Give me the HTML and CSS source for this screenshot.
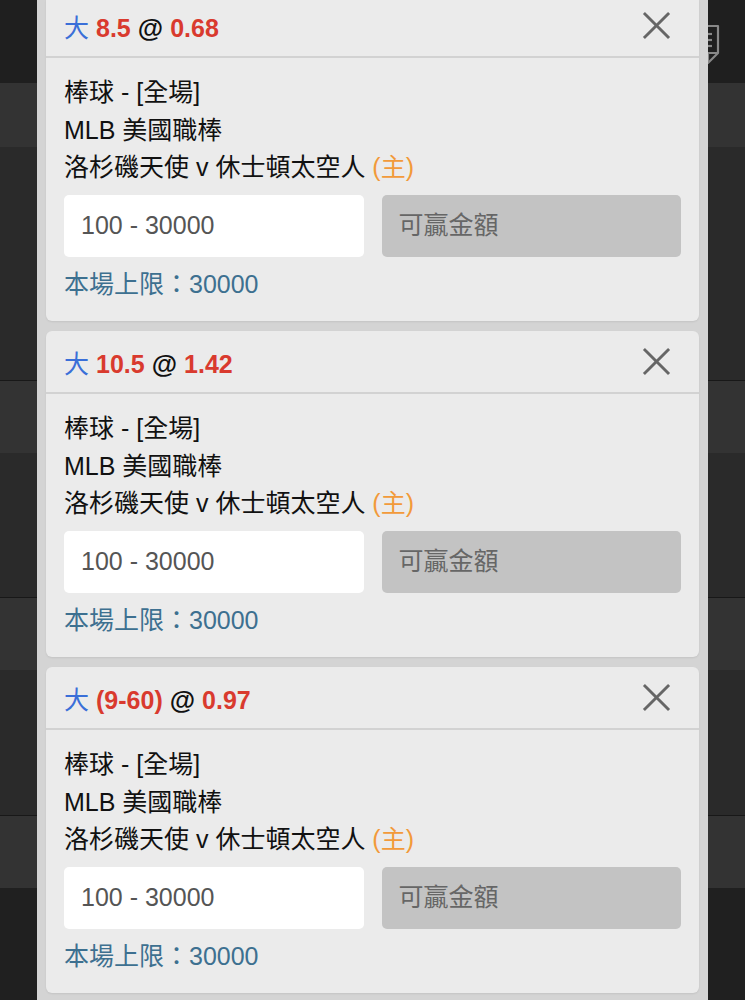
FILE: index.html
```html
<!DOCTYPE html>
<html lang="zh-Hant">
<head>
  <meta charset="UTF-8" />
  <meta name="viewport" content="width=device-width, initial-scale=1.0" />
  <title>投注單</title>
  <link rel="stylesheet" href="styles.css">
</head>
<body>
  <div class="backdrop">
    <div class="band band-top">
      <svg class="note-icon" viewBox="0 0 32 42" xmlns="http://www.w3.org/2000/svg">
        <path d="M3,3 L29,3 L29,30 L19,40 L3,40 Z" fill="none" stroke="#888" stroke-width="2.2" stroke-linejoin="round"/>
        <path d="M19,40 L19,30 L29,30" fill="none" stroke="#888" stroke-width="2.2" stroke-linejoin="round"/>
        <line x1="9" y1="11" x2="23" y2="11" stroke="#888" stroke-width="2.2"/>
        <line x1="9" y1="17" x2="23" y2="17" stroke="#888" stroke-width="2.2"/>
        <line x1="9" y1="23" x2="23" y2="23" stroke="#888" stroke-width="2.2"/>
      </svg>
    </div>
    <div class="band band-light" style="height:64px"></div>
    <div class="band band-mid" style="height:233px"></div>
    <div class="band band-light line" style="height:73px"></div>
    <div class="band band-mid" style="height:144px"></div>
    <div class="band band-light line" style="height:73px"></div>
    <div class="band band-mid" style="height:145px"></div>
    <div class="band band-light line" style="height:73px"></div>
    <div class="band band-dark"></div>
  </div>

  <div class="sheet">
    <div class="bet-list">

      <div class="bet-card">
        <div class="bet-head">
          <div class="bet-title">
            <span class="side">大</span>
            <span class="odds">8.5</span>
            <span class="at">@</span>
            <span class="odds">0.68</span>
          </div>
          <svg class="close-btn" viewBox="0 0 30 30" xmlns="http://www.w3.org/2000/svg">
            <line x1="2" y1="2" x2="28" y2="28" />
            <line x1="28" y1="2" x2="2" y2="28" />
          </svg>
        </div>
        <div class="bet-body">
          <div class="line">棒球 - [全場]</div>
          <div class="line">MLB 美國職棒</div>
          <div class="line">洛杉磯天使 v 休士頓太空人 <span class="home">(主)</span></div>
          <div class="amount-row">
            <div class="stake">100 - 30000</div>
            <div class="payout">可贏金額</div>
          </div>
          <div class="limit">本場上限：30000</div>
        </div>
      </div>

      <div class="bet-card">
        <div class="bet-head">
          <div class="bet-title">
            <span class="side">大</span>
            <span class="odds">10.5</span>
            <span class="at">@</span>
            <span class="odds">1.42</span>
          </div>
          <svg class="close-btn" viewBox="0 0 30 30" xmlns="http://www.w3.org/2000/svg">
            <line x1="2" y1="2" x2="28" y2="28" />
            <line x1="28" y1="2" x2="2" y2="28" />
          </svg>
        </div>
        <div class="bet-body">
          <div class="line">棒球 - [全場]</div>
          <div class="line">MLB 美國職棒</div>
          <div class="line">洛杉磯天使 v 休士頓太空人 <span class="home">(主)</span></div>
          <div class="amount-row">
            <div class="stake">100 - 30000</div>
            <div class="payout">可贏金額</div>
          </div>
          <div class="limit">本場上限：30000</div>
        </div>
      </div>

      <div class="bet-card">
        <div class="bet-head">
          <div class="bet-title">
            <span class="side">大</span>
            <span class="odds">(9-60)</span>
            <span class="at">@</span>
            <span class="odds">0.97</span>
          </div>
          <svg class="close-btn" viewBox="0 0 30 30" xmlns="http://www.w3.org/2000/svg">
            <line x1="2" y1="2" x2="28" y2="28" />
            <line x1="28" y1="2" x2="2" y2="28" />
          </svg>
        </div>
        <div class="bet-body">
          <div class="line">棒球 - [全場]</div>
          <div class="line">MLB 美國職棒</div>
          <div class="line">洛杉磯天使 v 休士頓太空人 <span class="home">(主)</span></div>
          <div class="amount-row">
            <div class="stake">100 - 30000</div>
            <div class="payout">可贏金額</div>
          </div>
          <div class="limit">本場上限：30000</div>
        </div>
      </div>

    </div>
  </div>
</body>
</html>
```

FILE: styles.css
```css
:root {
  --panel: #d4d4d4;
  --card: #ebebeb;
  --divider: #d2d2d2;
  --blue: #3a6fd8;
  --red: #d93a2e;
  --orange: #f29a3a;
  --steel: #3d7090;
}

* {
  box-sizing: border-box;
  margin: 0;
  padding: 0;
}

html, body {
  width: 745px;
  height: 1000px;
  overflow: hidden;
  background: #222;
  font-family: "Liberation Sans", "Noto Sans CJK TC", sans-serif;
}

body {
  position: relative;
}

/* page behind the bet sheet */
.backdrop {
  display: flex;
  flex-direction: column;
  height: 100%;
}

.band {
  flex-shrink: 0;
}

.band.line {
  border-top: 1px solid #181818;
}

.band-top {
  height: 83px;
  background: #1f1f1f;
  display: flex;
  justify-content: flex-end;
  align-items: center;
  padding-right: 24px;
}

.note-icon {
  width: 32px;
  height: 42px;
  margin-top: 4px;
}

.band-light {
  background: #333;
}

.band-mid {
  background: #2a2a2a;
}

.band-dark {
  flex: 1;
  background: #202020;
}

/* bet sheet overlay */
.sheet {
  position: absolute;
  top: 0;
  left: 37px;
  width: 671px;
  height: 100%;
  background: var(--panel);
  padding: 0 9px;
  overflow: hidden;
}

.bet-list {
  display: flex;
  flex-direction: column;
  gap: 10px;
  margin-top: -5px;
}

.bet-card {
  background: var(--card);
  border-radius: 6px;
  box-shadow: 0 1px 2px rgba(0,0,0,0.08);
}

.bet-head {
  height: 63px;
  display: flex;
  align-items: center;
  justify-content: space-between;
  padding: 0 28px 0 18px;
  border-bottom: 2px solid var(--divider);
}

.bet-title {
  font-size: 25px;
  display: flex;
  gap: 7px;
  align-items: baseline;
}

.side {
  color: var(--blue);
}

.odds {
  color: var(--red);
  font-weight: 700;
}

.at {
  color: #111;
  font-weight: 700;
  font-size: 26px;
}

.close-btn {
  width: 29px;
  height: 29px;
}

.close-btn line {
  stroke: #666;
  stroke-width: 3;
}

.bet-body {
  padding: 16px 18px 18px;
  font-size: 25px;
  line-height: 37.5px;
  color: #111;
}

.home {
  color: var(--orange);
}

.amount-row {
  display: grid;
  grid-template-columns: 1fr 1fr;
  gap: 18px;
  margin-top: 8px;
}

.stake,
.payout {
  height: 62px;
  border-radius: 5px;
  display: flex;
  align-items: center;
  padding-left: 17px;
}

.stake {
  background: #fff;
  color: #555;
}

.payout {
  background: #c3c3c3;
  color: #666;
}

.limit {
  margin-top: 9px;
  color: var(--steel);
}
```
